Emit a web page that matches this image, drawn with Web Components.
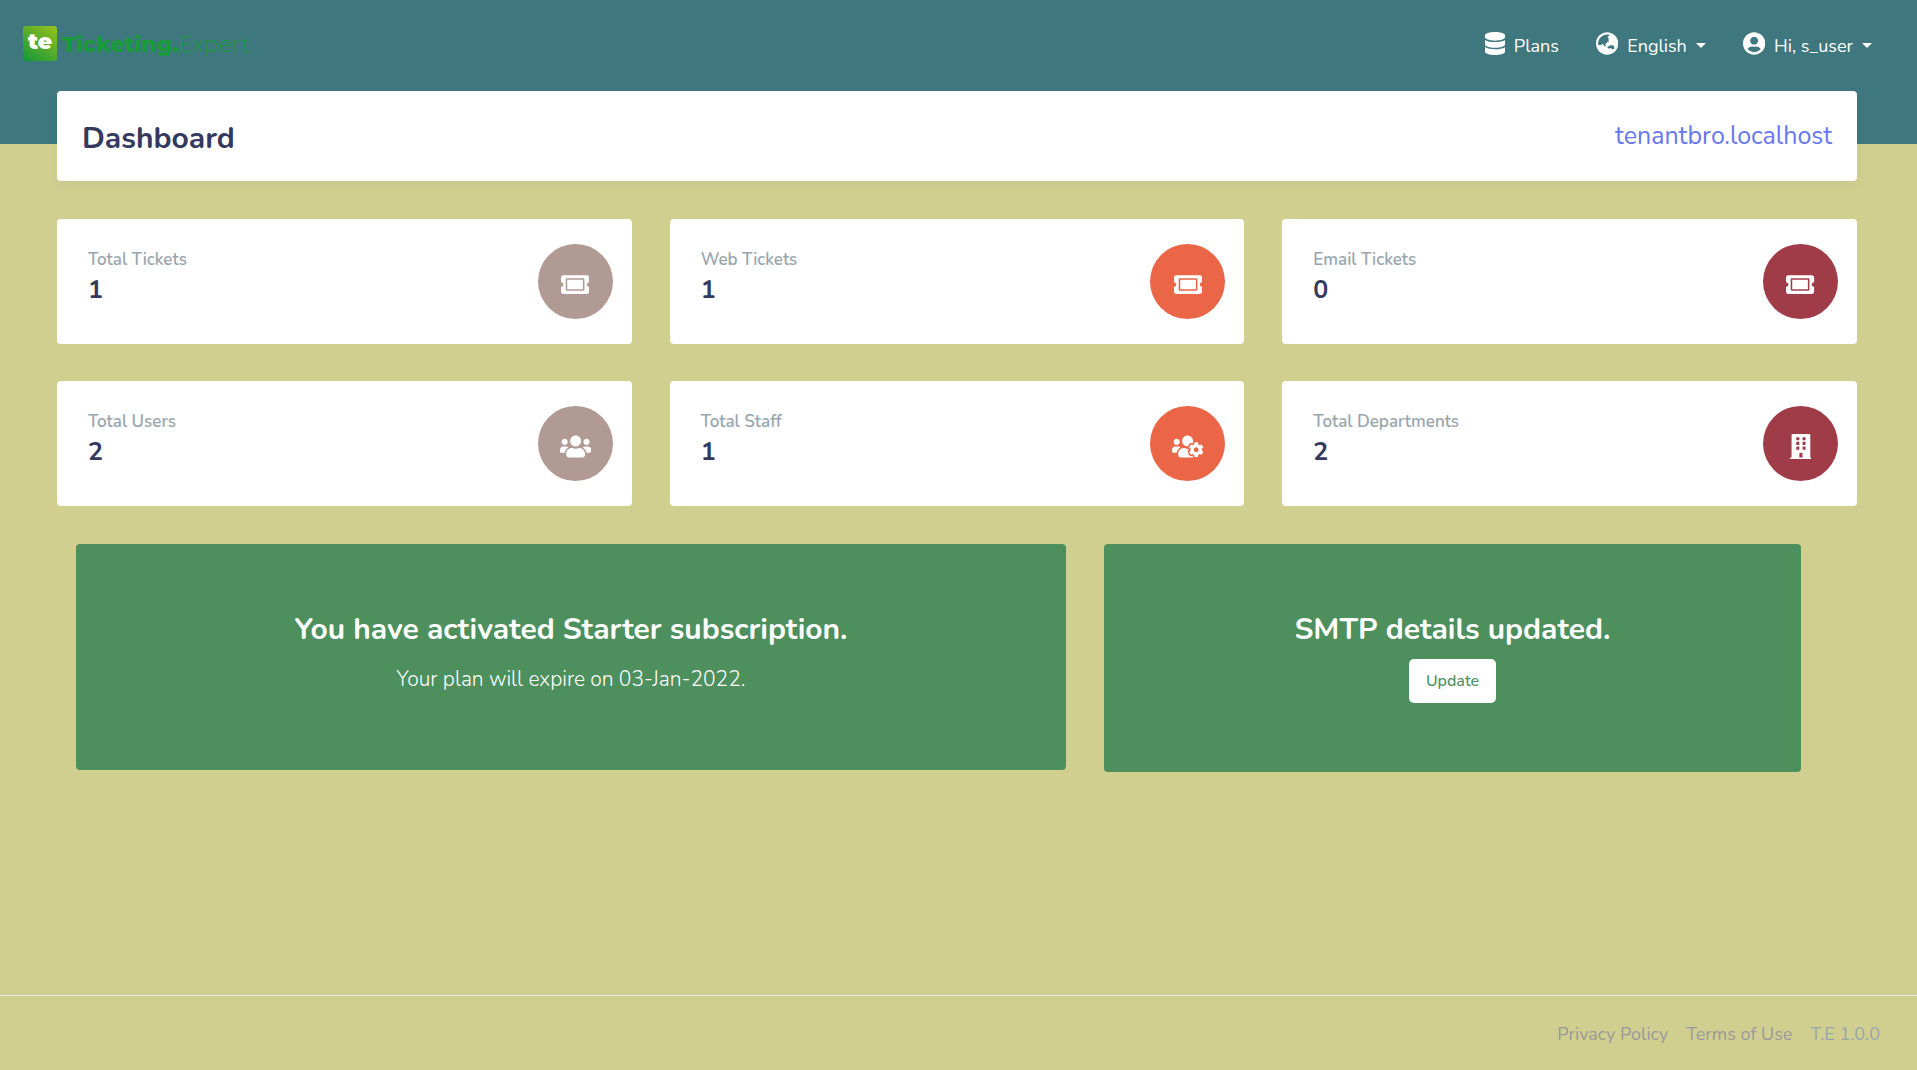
<!DOCTYPE html>
<html lang="en">
<head>
<meta charset="utf-8">
<title>Dashboard - Ticketing.Expert</title>
<style>
  body { margin: 0; font-family: Nunito, Lato, "Noto Sans", sans-serif; color: #32325d; }
</style>
</head>
<body>
<te-app>
  <te-navbar slot="nav"></te-navbar>
  <te-page-header heading="Dashboard" domain="tenantbro.localhost"></te-page-header>
  <te-stats>
    <te-stat label="Total Tickets" value="1" icon="ticket" tone="taupe"></te-stat>
    <te-stat label="Web Tickets" value="1" icon="ticket" tone="orange"></te-stat>
    <te-stat label="Email Tickets" value="0" icon="ticket" tone="wine"></te-stat>
    <te-stat label="Total Users" value="2" icon="users" tone="taupe"></te-stat>
    <te-stat label="Total Staff" value="1" icon="usersCog" tone="orange"></te-stat>
    <te-stat label="Total Departments" value="2" icon="building" tone="wine"></te-stat>
  </te-stats>
  <te-notices>
    <te-notice heading="You have activated Starter subscription."><p>Your plan will expire on 03-Jan-2022.</p></te-notice>
    <te-notice heading="SMTP details updated."><te-button>Update</te-button></te-notice>
  </te-notices>
  <te-footer slot="footer"></te-footer>
</te-app>
<script>
const windows = [76, 172, 268].map(y => [128, 256].map(x =>
  `M${x} ${y}c0-6.6 5.4-12 12-12h40c6.6 0 12 5.4 12 12v40c0 6.6-5.4 12-12 12h-40c-6.6 0-12-5.4-12-12z`).join('')).join('');

const ICONS = {
  database: [448, 'M448 73.143v45.714C448 159.143 347.667 192 224 192S0 159.143 0 118.857V73.143C0 32.857 100.333 0 224 0s224 32.857 224 73.143zM448 176v102.857C448 319.143 347.667 352 224 352S0 319.143 0 278.857V176c48.125 33.143 136.208 48.572 224 48.572S399.874 209.143 448 176zm0 160v102.857C448 479.143 347.667 512 224 512S0 479.143 0 438.857V336c48.125 33.143 136.208 48.572 224 48.572S399.874 369.143 448 336z'],
  globe: [496, 'M248 8C111.03 8 0 119.03 0 256s111.03 248 248 248 248-111.03 248-248S384.97 8 248 8zm-11.34 240.23c-2.89 4.82-8.1 7.77-13.72 7.77h-.31c-4.24 0-8.31 1.69-11.31 4.69l-5.66 5.66c-3.12 3.12-3.12 8.19 0 11.31l5.66 5.66c3 3 4.69 7.07 4.69 11.31V304c0 8.84-7.16 16-16 16h-6.11c-6.06 0-11.6-3.42-14.31-8.85l-22.62-45.23c-2.44-4.88-8.95-5.94-12.81-2.08l-19.47 19.46c-3 3-7.07 4.69-11.31 4.69H50.81C49.12 277.55 48 266.92 48 256c0-110.28 89.72-200 200-200 21.51 0 42.2 3.51 61.63 9.82l-50.16 38.53c-5.11 3.41-4.63 11.06.86 13.81l10.83 5.41c5.42 2.71 8.84 8.25 8.84 14.31V216c0 4.42-3.58 8-8 8h-3.06c-3.03 0-5.8-1.71-7.15-4.42-1.56-3.12-5.96-3.29-7.76-.3l-17.37 28.95zM408 358.43c0 4.24-1.69 8.31-4.69 11.31l-9.57 9.57c-3 3-7.07 4.69-11.31 4.69h-15.16c-4.24 0-8.31-1.69-11.31-4.69l-13.01-13.01a26.767 26.767 0 0 0-25.42-7.04l-21.27 5.32c-1.27.32-2.57.48-3.88.48h-10.34c-4.24 0-8.31-1.69-11.31-4.69l-11.91-11.91a8.008 8.008 0 0 1-2.34-5.66v-10.2c0-3.27 1.99-6.21 5.03-7.43l39.34-15.74c1.98-.79 3.86-1.82 5.59-3.05l23.71-16.89a7.978 7.978 0 0 1 4.64-1.48h12.09c3.23 0 6.15 1.94 7.39 4.93l5.35 12.85a4 4 0 0 0 3.69 2.46h3.8c1.78 0 3.35-1.18 3.84-2.88l4.2-14.47c.5-1.71 2.06-2.88 3.84-2.88h6.06c2.21 0 4 1.79 4 4v12.93c0 2.12.84 4.16 2.34 5.66l11.91 11.91c3 3 4.69 7.07 4.69 11.31v24.6z'],
  user: [496, 'M248 8C111 8 0 119 0 256s111 248 248 248 248-111 248-248S385 8 248 8zm0 96c48.6 0 88 39.4 88 88s-39.4 88-88 88-88-39.4-88-88 39.4-88 88-88zm0 344c-58.7 0-111.3-26.6-146.5-68.2 18.8-35.4 55.6-59.8 98.5-59.8 2.4 0 4.8.4 7.1 1.1 13 4.2 26.6 6.9 40.9 6.9 14.3 0 28-2.7 40.9-6.9 2.3-.7 4.7-1.1 7.1-1.1 42.9 0 79.7 24.4 98.5 59.8C359.3 421.4 306.7 448 248 448z'],
  ticket: [576, 'M128 160h320v192H128V160zm400 96c0 26.51 21.49 48 48 48v96c0 26.51-21.49 48-48 48H48c-26.51 0-48-21.49-48-48v-96c26.51 0 48-21.49 48-48s-21.49-48-48-48v-96c0-26.51 21.49-48 48-48h480c26.51 0 48 21.49 48 48v96c-26.51 0-48 21.49-48 48zm-48-104c0-13.255-10.745-24-24-24H120c-13.255 0-24 10.745-24 24v208c0 13.255 10.745 24 24 24h336c13.255 0 24-10.745 24-24V152z'],
  users: [640, 'M96 224c35.3 0 64-28.7 64-64s-28.7-64-64-64-64 28.7-64 64 28.7 64 64 64zm448 0c35.3 0 64-28.7 64-64s-28.7-64-64-64-64 28.7-64 64 28.7 64 64 64zm32 32h-64c-17.6 0-33.5 7.1-45.1 18.6 40.3 22.1 68.9 62 75.1 109.4h66c17.7 0 32-14.3 32-32v-32c0-35.3-28.7-64-64-64zm-256 0c61.9 0 112-50.1 112-112S381.9 32 320 32 208 82.1 208 144s50.1 112 112 112zm76.8 32h-8.3c-20.8 10-43.9 16-68.5 16s-47.6-6-68.5-16h-8.3C179.6 288 128 339.6 128 403.2V432c0 26.5 21.5 48 48 48h288c26.5 0 48-21.5 48-48v-28.8c0-63.6-51.6-115.2-115.2-115.2zm-223.7-13.4C161.5 263.1 145.6 256 128 256H64c-35.3 0-64 28.7-64 64v32c0 17.7 14.3 32 32 32h65.9c6.3-47.4 34.9-87.3 75.2-109.4z'],
  usersCog: [640, 'M610.5 341.3c2.6-14.1 2.6-28.5 0-42.6l25.8-14.9c3-1.7 4.3-5.2 3.3-8.5-6.7-21.6-18.2-41.2-33.2-57.4-2.3-2.5-6-3.1-9-1.4l-25.8 14.9c-10.9-9.3-23.4-16.5-36.9-21.3v-29.8c0-3.4-2.4-6.4-5.7-7.1-22.3-5-45-4.8-66.2 0-3.3.7-5.7 3.7-5.7 7.1v29.8c-13.5 4.8-26 12-36.9 21.3l-25.8-14.9c-2.9-1.7-6.7-1.1-9 1.4-15 16.2-26.5 35.8-33.2 57.4-1 3.3.4 6.8 3.3 8.5l25.8 14.9c-2.6 14.1-2.6 28.5 0 42.6l-25.8 14.9c-3 1.7-4.3 5.2-3.3 8.5 6.7 21.6 18.2 41.1 33.2 57.4 2.3 2.5 6 3.1 9 1.4l25.8-14.9c10.9 9.3 23.4 16.5 36.9 21.3v29.8c0 3.4 2.4 6.4 5.7 7.1 22.3 5 45 4.8 66.2 0 3.3-.7 5.7-3.7 5.7-7.1v-29.8c13.5-4.8 26-12 36.9-21.3l25.8 14.9c2.9 1.7 6.7 1.1 9-1.4 15-16.2 26.5-35.8 33.2-57.4 1-3.3-.4-6.8-3.3-8.5l-25.8-14.9zM496 368.5c-26.8 0-48.5-21.8-48.5-48.5s21.8-48.5 48.5-48.5 48.5 21.8 48.5 48.5-21.7 48.5-48.5 48.5zM96 224c35.3 0 64-28.7 64-64s-28.7-64-64-64-64 28.7-64 64 28.7 64 64 64zm224 32c1.9 0 3.7-.5 5.6-.6 8.3-21.7 20.5-42.1 36.3-59.2 7.4-8 17.9-12.6 28.9-12.6 6.9 0 13.7 1.8 19.6 5.3l7.9 4.6c.8-.5 1.6-.9 2.4-1.4 7-14.6 11.2-30.8 11.2-48 0-61.9-50.1-112-112-112S208 82.1 208 144c0 61.9 50.1 112 112 112zm105.2 194.5c-2.3-1.2-4.6-2.6-6.8-3.9-8.2 4.8-15.3 9.8-27.5 9.8-10.9 0-21.4-4.6-28.9-12.6-18.3-19.8-32.3-43.9-40.2-69.6-10.7-34.5 24.9-49.7 25.8-50.3-.1-2.6-.1-5.2 0-7.8l-7.9-4.6c-3.8-2.2-7-5-9.8-8.1-3.3.2-6.5.6-9.8.6-24.6 0-47.6-6-68.5-16h-8.3C179.6 288 128 339.6 128 403.2V432c0 26.5 21.5 48 48 48h255.4c-3.7-6-6.2-12.8-6.2-20.3v-9.2zM173.1 274.6C161.5 263.1 145.6 256 128 256H64c-35.3 0-64 28.7-64 64v32c0 17.7 14.3 32 32 32h65.9c6.3-47.4 34.9-87.3 75.2-109.4z'],
  building: [448, 'M436 480h-20V24c0-13.3-10.7-24-24-24H56C42.7 0 32 10.7 32 24v456H12c-6.6 0-12 5.4-12 12v20h448v-20c0-6.6-5.4-12-12-12z' + windows + 'M192 480v-84c0-6.6 5.4-12 12-12h40c6.6 0 12 5.4 12 12v84z']
};

const define = (name, render) => customElements.define(name, class extends HTMLElement {
  constructor() { super(); this.attachShadow({ mode: 'open' }); }
  connectedCallback() { this.shadowRoot.innerHTML = render(this); }
});
const attr = (el, name) => el.getAttribute(name) || '';

define('te-icon', el => {
  const [width, path] = ICONS[attr(el, 'name')];
  return `<style>
    :host { display: inline-flex; height: var(--icon-size, 23px); }
    svg { height: 100%; fill: currentColor; }
  </style>
  <svg viewBox="0 0 ${width} 512" fill-rule="evenodd" aria-hidden="true"><path d="${path}"/></svg>`;
});

define('te-app', () => `<style>
    :host { display: flex; flex-direction: column; min-height: 100vh;
      background: linear-gradient(#3e787e 144px, #d1cf90 144px); }
    main { flex: 1; display: flex; flex-direction: column; gap: 38px; padding: 0 60px 40px 57px; }
  </style>
  <slot name="nav"></slot><main><slot></slot></main><slot name="footer"></slot>`);

define('te-logo', () => `<style>
    :host { display: block; }
    a { display: flex; align-items: center; gap: 5px; text-decoration: none; color: #199b3a;
      font: 22px/34px Montserrat, Inter, sans-serif; }
    .mark { width: 34px; height: 35px; border-radius: 3px; text-align: center;
      background: linear-gradient(35deg, #12963a, #98c11d); color: #fff; line-height: 32px; font-weight: 900; }
    .name { padding-top: 2px; font-weight: 300; }
    b { font-weight: 800; }
  </style>
  <a href="#"><span class="mark">te</span><span class="name"><b>Ticketing.</b>Expert</span></a>`);

define('te-nav-item', el => `<style>
    :host { display: block; }
    a { display: flex; align-items: center; color: #fff; text-decoration: none; font-size: 18px; line-height: 28px; gap: 9px; }
    te-icon { margin-bottom: 4px; }
    .caret { border: 5px solid transparent; border-top-color: #fff; border-bottom: 0; }
  </style>
  <a href="#"><te-icon name="${attr(el, 'icon')}"></te-icon><slot></slot>${el.hasAttribute('menu') ? '<span class="caret"></span>' : ''}</a>`);

define('te-navbar', () => `<style>
    :host { display: flex; align-items: center; justify-content: space-between; height: 91px;
      padding: 0 45px 0 23px; box-sizing: border-box; }
    te-logo { padding-bottom: 4px; }
    nav { display: flex; gap: 37px; }
  </style>
  <te-logo></te-logo>
  <nav>
    <te-nav-item icon="database">Plans</te-nav-item>
    <te-nav-item icon="globe" menu>English</te-nav-item>
    <te-nav-item icon="user" menu>Hi, s_user</te-nav-item>
  </nav>`);

define('te-page-header', el => `<style>
    :host { display: flex; justify-content: space-between; align-items: center; height: 90px; box-sizing: border-box;
      padding: 0 25px; background: #fff; border-radius: 4px; box-shadow: 0 5px 10px rgba(0, 0, 0, .04); }
    h1 { margin: 0; font-size: 30px; line-height: 40px; font-weight: 700; color: #34395e; padding-top: 6px; }
    a { font-size: 25px; line-height: 36px; color: #6777ef; text-decoration: none; }
  </style>
  <h1>${attr(el, 'heading')}</h1><a href="#">${attr(el, 'domain')}</a>`);

define('te-stats', () => `<style>
    :host { display: grid; grid-template-columns: repeat(3, 1fr); gap: 37px 38px; }
  </style><slot></slot>`);

const TONES = { taupe: '#b09a93', orange: '#ea6647', wine: '#a03c48' };
define('te-stat', el => `<style>
    :host { display: flex; justify-content: space-between; align-items: flex-start; box-sizing: border-box; height: 125px;
      padding: 25px 19px 0 31px; background: #fff; border-radius: 4px; }
    h2 { margin: 0; padding-top: 2px; font-size: 17px; line-height: 28px; font-weight: 600; color: #98a6ad; }
    p { margin: 0; font-size: 25px; line-height: 32px; font-weight: 700; color: #34395e; }
    .disc { display: flex; align-items: center; justify-content: center; width: 75px; height: 75px; box-sizing: border-box;
      padding-top: 6px; border-radius: 50%; color: #fff; background: ${TONES[attr(el, 'tone')]}; --icon-size: 25px; }
  </style>
  <div><h2>${attr(el, 'label')}</h2><p>${attr(el, 'value')}</p></div>
  <div class="disc"><te-icon name="${attr(el, 'icon')}"></te-icon></div>`);

define('te-notices', () => `<style>
    :host { display: grid; grid-template-columns: 990fr 697fr; align-items: start; gap: 38px; padding: 0 56px 0 19px; }
  </style><slot></slot>`);

define('te-notice', el => `<style>
    :host { display: flex; flex-direction: column; align-items: center; box-sizing: border-box; min-height: 226px;
      padding: 65px 19px 69px; background: #4d8f5d; border-radius: 4px; color: #fff; text-align: center; }
    h2 { margin: 0; font-size: 30px; line-height: 42px; font-weight: 700; }
    ::slotted(p) { margin: 8px 0 0; font-size: 21px; line-height: 40px; font-weight: 300; }
    ::slotted(te-button) { margin-top: 8px; }
  </style><h2>${attr(el, 'heading')}</h2><slot></slot>`);

define('te-button', () => `<style>
    :host { display: block; }
    button { display: block; height: 44px; padding: 0 17px; border: 0; border-radius: 5px; background: #fff; color: #4d8f5d;
      font: 500 16px/24px Nunito, Lato, "Noto Sans", sans-serif; }
  </style><button type="button"><slot></slot></button>`);

define('te-footer', () => `<style>
    :host { display: flex; align-items: center; justify-content: flex-end; gap: 18px; height: 75px; box-sizing: border-box;
      padding: 2px 37px 0; border-top: 1px solid #e3eaef; font-size: 18px; line-height: 28px; color: #98a6ad; }
    a { color: #999; text-decoration: none; }
  </style>
  <a href="#">Privacy Policy</a><a href="#">Terms of Use</a><span>T.E 1.0.0</span>`);
</script>
</body>
</html>
